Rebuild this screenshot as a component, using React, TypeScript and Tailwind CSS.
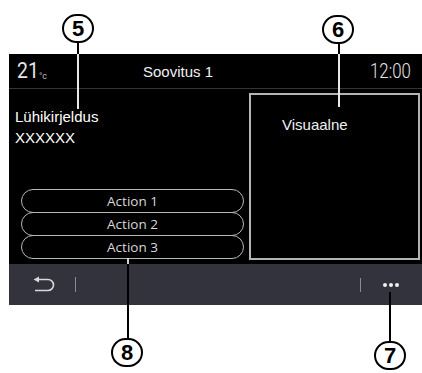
import React from "react";

function Callout({ n, cx, cy }: { n: string; cx: number; cy: number }) {
  return (
    <div
      className="absolute flex items-center justify-center rounded-full border-2 border-black bg-white text-black"
      style={{ left: cx - 16, top: cy - 14, width: 32, height: 29 }}
    >
      <span className="text-[22px] font-bold leading-none" style={{ fontFamily: '"Liberation Sans", Arial, sans-serif' }}>
        {n}
      </span>
    </div>
  );
}

function VLine({ x, y1, y2, color }: { x: number; y1: number; y2: number; color: string }) {
  return <div className="absolute" style={{ left: x - 1, top: y1, width: 2, height: y2 - y1, background: color }} />;
}

export default function App() {
  const sans = { fontFamily: '"Liberation Sans", Arial, sans-serif' };
  const roboto = { fontFamily: 'Roboto, "Liberation Sans", sans-serif' };
  const open = { fontFamily: '"Open Sans", "Noto Sans", sans-serif' };
  return (
    <div className="relative h-[373px] w-[422px] overflow-hidden bg-white">
      <div className="ml-[9px] mt-[54px] flex h-[251px] w-[413px] flex-col bg-black">
        {/* header */}
        <div className="flex h-[35px] items-center border-b border-[#343434] text-[#e6e6e6]">
          <div className="flex w-[134px] items-end pl-2">
            <span className="inline-block w-[21px] origin-left scale-x-[0.88] text-[22px] leading-none" style={roboto}>
              21
            </span>
            <span className="ml-[1px] mb-[1px] text-[9px] leading-none text-[#bbb]" style={roboto}>
              °c
            </span>
          </div>
          <span className="text-[15px] leading-none text-[#f0f0f0]" style={sans}>
            Soovitus 1
          </span>
          <div className="flex-1" />
          <span className="origin-right scale-x-[0.8] pr-[14px] text-[21px] font-light leading-none" style={roboto}>
            12:00
          </span>
        </div>
        {/* content */}
        <div className="flex h-[175px]">
          <div className="flex w-[240px] flex-col justify-between pb-[5px] pl-[6px] pt-[17px]">
            <div className="text-[15px] leading-[21px] text-white" style={sans}>
              <div>Lühikirjeldus</div>
              <div>XXXXXX</div>
            </div>
            <div className="ml-[6px] flex w-[223px] flex-col">
              {["Action 1", "Action 2", "Action 3"].map((a, i) => (
                <div
                  key={a}
                  className={`flex h-[24px] items-center justify-center rounded-full border border-[#b8b8b8] text-[13.5px] text-[#d8d8d8] ${i > 0 ? "-mt-[1px]" : ""}`}
                  style={open}
                >
                  {a}
                </div>
              ))}
            </div>
          </div>
          <div className="mt-[4px] h-[167px] w-[171px] border-2 border-[#b4b4b4] pl-[31px] pt-[17px]">
            <span className="text-[15px] leading-[18px] text-[#f0f0f0]" style={sans}>
              Visuaalne
            </span>
          </div>
        </div>
        {/* bottom bar */}
        <div className="flex h-[41px] items-center bg-[#33333d]">
          <svg className="ml-[24px]" width="22" height="17" viewBox="0 0 22 17">
            <path d="M5 3.5 H15 A5.5 5.5 0 0 1 15 14.5 H2" fill="none" stroke="#d8d8dc" strokeWidth="1.6" />
            <path d="M0.5 3.5 L6 0.5 L6 6.5 Z" fill="#d8d8dc" />
          </svg>
          <div className="ml-[20px] h-[15px] w-px bg-[#8a8a92]" />
          <div className="flex-1" />
          <div className="h-[14px] w-px bg-[#8a8a92]" />
          <div className="ml-[22px] mr-[23px] flex gap-[2px]">
            <div className="h-[4px] w-[4px] rounded-full bg-[#f0f0f0]" />
            <div className="h-[4px] w-[4px] rounded-full bg-[#f0f0f0]" />
            <div className="h-[4px] w-[4px] rounded-full bg-[#f0f0f0]" />
          </div>
        </div>
      </div>

      {/* callouts */}
      <VLine x={78} y1={42} y2={54} color="#000" />
      <VLine x={78} y1={54} y2={109} color="#e8e8e8" />
      <Callout n="5" cx={78} cy={28} />

      <VLine x={339} y1={42} y2={54} color="#000" />
      <VLine x={339} y1={54} y2={107} color="#e8e8e8" />
      <Callout n="6" cx={338} cy={29} />

      <VLine x={128} y1={258} y2={264} color="#d0d0d0" />
      <VLine x={128} y1={264} y2={338} color="#000" />
      <Callout n="8" cx={127} cy={352} />

      <VLine x={390} y1={292} y2={341} color="#000" />
      <Callout n="7" cx={390} cy={355} />
    </div>
  );
}
